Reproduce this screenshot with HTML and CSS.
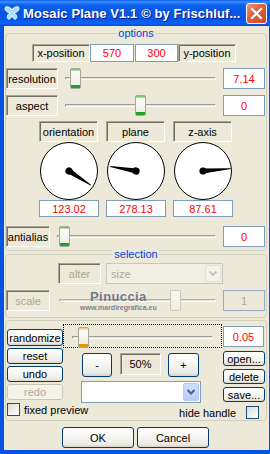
FILE: index.html
```html
<!DOCTYPE html>
<html>
<head>
<meta charset="utf-8">
<title>Mosaic Plane</title>
<link rel="stylesheet" href="styles.css">
</head>
<body>
<div class="window">
  <div class="titlebar">
    <svg class="app-icon" width="16" height="16" viewBox="0 0 16 16">
      <path d="M8 5 C6.5 1.5 1 0.8 1 3.2 C1 6 4 7.6 6.2 8 C3.5 9 2.4 12 4 13.8 C5.8 15.2 7.2 12.4 8 10.2 C8.8 12.4 10.2 15.2 12 13.8 C13.6 12 12.5 9 9.8 8 C12 7.6 15 6 15 3.2 C15 0.8 9.5 1.5 8 5Z" fill="#A9DDFF" stroke="#FFFFFF" stroke-width="1"/>
    </svg>
    <span class="title">Mosaic Plane V1.1 © by Frischluf...</span>
    <span class="close">
      <svg width="19" height="19" viewBox="0 0 19 19"><path d="M5 5 L14 14 M14 5 L5 14" stroke="#FFFFFF" stroke-width="2.2" stroke-linecap="square"/></svg>
    </span>
  </div>
  <div class="client">
    <div class="group options">
      <span class="group-title">options</span>
      <div class="row pos-row">
        <span class="sunken lbl-pos">x-position</span>
        <span class="edit pos-x">570</span>
        <span class="edit pos-y">300</span>
        <span class="sunken lbl-pos">y-position</span>
      </div>
      <div class="row slider-row">
        <span class="sunken lbl-wide">resolution</span>
        <div class="slider slider-wide"><div class="track"></div><span class="thumb" style="left:12px"></span></div>
        <span class="edit val">7.14</span>
      </div>
      <div class="row slider-row">
        <span class="sunken lbl-wide">aspect</span>
        <div class="slider slider-wide"><div class="track"></div><span class="thumb" style="left:77px"></span></div>
        <span class="edit val">0</span>
      </div>
      <div class="dials">
        <div class="dial">
          <span class="sunken dial-lbl">orientation</span>
          <svg class="dial-face" width="60" height="58" viewBox="0 0 60 58">
            <circle cx="30" cy="29" r="28.5" fill="#FFFFFF" stroke="#000000"/>
            <g transform="translate(30 29) rotate(33)"><path d="M0 -2.6 L26 -0.4 L26 0.4 L0 2.6Z"/><circle r="3.6"/></g>
          </svg>
          <span class="edit dial-val">123.02</span>
        </div>
        <div class="dial">
          <span class="sunken dial-lbl">plane</span>
          <svg class="dial-face" width="60" height="58" viewBox="0 0 60 58">
            <circle cx="30" cy="29" r="28.5" fill="#FFFFFF" stroke="#000000"/>
            <g transform="translate(30 29) rotate(190)"><path d="M0 -2.6 L26 -0.4 L26 0.4 L0 2.6Z"/><circle r="3.6"/></g>
          </svg>
          <span class="edit dial-val">278.13</span>
        </div>
        <div class="dial">
          <span class="sunken dial-lbl">z-axis</span>
          <svg class="dial-face" width="60" height="58" viewBox="0 0 60 58">
            <circle cx="30" cy="29" r="28.5" fill="#FFFFFF" stroke="#000000"/>
            <g transform="translate(30 29) rotate(-5)"><path d="M0 -2.6 L28 -0.4 L28 0.4 L0 2.6Z"/><circle r="3.6"/></g>
          </svg>
          <span class="edit dial-val">87.61</span>
        </div>
      </div>
      <div class="row slider-row aa-row">
        <span class="sunken lbl-narrow">antialias</span>
        <div class="slider slider-narrow"><div class="track"></div><span class="thumb" style="left:9px"></span></div>
        <span class="edit val">0</span>
      </div>
    </div>

    <div class="group selection">
      <span class="group-title">selection</span>
      <div class="row alter-row">
        <span class="sunken disabled lbl-alter">alter</span>
        <div class="combo combo-disabled">
          <span class="combo-text">size</span>
          <span class="combo-btn"><svg width="14" height="15" viewBox="0 0 14 15"><path d="M3.5 5.5 L7 9 L10.5 5.5" fill="none" stroke="#C5C4BC" stroke-width="2"/></svg></span>
        </div>
      </div>
      <div class="row slider-row scale-row">
        <span class="sunken disabled lbl-narrow">scale</span>
        <div class="slider slider-narrow"><div class="track track-scale"></div><span class="thumb thumb-disabled" style="left:120px"></span></div>
        <span class="edit val edit-disabled">1</span>
      </div>
      <div class="watermark">
        <span class="wm-name">Pinuccia</span>
        <span class="wm-url">www.mardiregrafica.eu</span>
      </div>
    </div>

    <div class="group tools">
      <div class="row rand-row">
        <span class="btn btn-rand">randomize</span>
        <div class="slider slider-focus"><div class="track track-focus"></div><span class="thumb thumb-hot" style="left:14px"></span></div>
        <span class="edit val val-rand">0.05</span>
      </div>
      <div class="lower">
        <div class="col-left">
          <span class="btn btn-small">reset</span>
          <span class="btn btn-small">undo</span>
          <span class="btn btn-small disabled">redo</span>
        </div>
        <div class="col-mid">
          <div class="zoom-row">
            <span class="btn btn-zoom">-</span>
            <span class="sunken zoom-val">50%</span>
            <span class="btn btn-zoom btn-plus">+</span>
          </div>
          <div class="combo combo-active">
            <span class="combo-text"></span>
            <span class="combo-btn"><svg width="14" height="16" viewBox="0 0 14 16"><path d="M3.5 6 L7 9.5 L10.5 6" fill="none" stroke="#4D6185" stroke-width="2"/></svg></span>
          </div>
        </div>
        <div class="col-right">
          <span class="btn btn-file">open...</span>
          <span class="btn btn-file">delete</span>
          <span class="btn btn-file">save...</span>
        </div>
      </div>
      <div class="checks">
        <label class="check"><span class="box"></span><span>fixed preview</span></label>
        <label class="check check-right"><span>hide handle</span><span class="box"></span></label>
      </div>
    </div>

    <div class="dialog-buttons">
      <span class="btn btn-dlg">OK</span>
      <span class="btn btn-dlg">Cancel</span>
    </div>
  </div>
</div>
</body>
</html>
```

FILE: styles.css
```css
* { box-sizing: border-box; }
html, body { margin: 0; padding: 0; }
body {
  width: 270px;
  height: 454px;
  overflow: hidden;
  background: #ffffff;
  font-family: "Liberation Sans", Arial, sans-serif;
  font-size: 11px;
  color: #000000;
}

.window {
  width: 270px;
  height: 454px;
  background: #0553E2;
  display: flex;
  flex-direction: column;
}

/* title bar */
.titlebar {
  height: 26px;
  flex: none;
  display: flex;
  align-items: center;
  background: linear-gradient(to bottom, #0A5FF0 0%, #3C8FFB 7%, #0F62EC 18%, #0657E6 45%, #0658EB 75%, #0C62F3 90%, #0348D8 100%);
}
.app-icon { margin-left: 4px; flex: none; }
.title {
  margin-left: 3px;
  color: #FFFFFF;
  font-weight: bold;
  font-size: 13px;
  letter-spacing: 0.1px;
  white-space: nowrap;
  text-shadow: 1px 1px 0 #0A1A8C;
}
.close {
  margin-left: auto;
  margin-right: 3px;
  width: 21px;
  height: 21px;
  flex: none;
  border: 1px solid #FFFFFF;
  border-radius: 3px;
  background: linear-gradient(135deg, #F0957A 0%, #E0643F 40%, #CC4A22 100%);
  display: flex;
  align-items: center;
  justify-content: center;
}

/* client */
.client {
  flex: 1;
  margin: 0 1px 4px 4px;
  background: #ECE9D8;
  display: flex;
  flex-direction: column;
}

.group {
  position: relative;
  margin-left: 1px;
  width: 262px;
  border: 1px solid #D0D0BF;
  border-radius: 4px;
  flex: none;
}
.group-title {
  position: absolute;
  top: -7px;
  left: 50%;
  transform: translateX(-50%);
  padding: 0 2px;
  background: #ECE9D8;
  color: #0046D5;
  line-height: 13px;
  white-space: nowrap;
}

.options { margin-top: 7px; padding: 10px 1px 3px 0; }
.selection { margin-top: 3px; padding: 8px 1px 6px 0; }
.tools { margin-top: 2px; padding: 3px 1px 1px 0; }

.row { display: flex; flex: none; }

/* common widgets */
.sunken {
  display: flex;
  align-items: center;
  justify-content: center;
  border-style: solid;
  border-width: 1px;
  border-color: #A7A596 #FFFFFF #FFFFFF #A7A596;
  box-shadow: inset 1px 1px 0 #716F64;
  white-space: nowrap;
  flex: none;
}
.sunken.disabled { color: #ACA899; }

.edit {
  display: flex;
  align-items: center;
  justify-content: center;
  border: 1px solid #7F9DB9;
  background: #FFFFFF;
  color: #FF0000;
  flex: none;
}
.edit-disabled {
  background: #ECE9D8;
  color: #ACA899;
  border-color: #95AAC4;
}

.btn {
  display: flex;
  align-items: center;
  justify-content: center;
  border: 1px solid #003C74;
  border-radius: 3px;
  background: linear-gradient(to bottom, #FFFFFF 0%, #F6F6F2 45%, #ECEBE6 85%, #D8D3C8 100%);
  color: #000000;
  white-space: nowrap;
  flex: none;
}
.btn.disabled {
  border-color: #C9C7BA;
  color: #ACA899;
  background: #F5F4EA;
}

/* options rows */
.pos-row { height: 18px; padding-left: 26px; }
.lbl-pos { width: 58px; }
.pos-x { width: 44px; }
.pos-y { width: 43px; margin-left: 1px; }

.slider-row { height: 21px; margin-top: 6px; }
.lbl-wide { width: 52px; }
.lbl-narrow { width: 44px; }
.val { width: 42px; }

.slider { position: relative; flex: none; height: 21px; }
.slider-wide { width: 165px; }
.slider-narrow { width: 173px; }
.track {
  margin: 9px 7px 0 7px;
  height: 3px;
  border-top: 1px solid #9D9C95;
  border-left: 1px solid #9D9C95;
  border-bottom: 1px solid #FFFFFF;
  border-right: 1px solid #FFFFFF;
  background: #E3E1D6;
}
.track-scale { margin-left: 9px; border-color: #B5B3A8 #FFFFFF #FFFFFF #B5B3A8; }
.thumb {
  position: absolute;
  top: 0;
  width: 11px;
  height: 21px;
  border: 1px solid #A8A79B;
  border-radius: 2px;
  background: linear-gradient(to bottom, #5BC25B 0, #B9E9B3 2px, #FBFBF9 2px, #EFEEE8 calc(100% - 3px), #21A121 calc(100% - 3px), #21A121 100%);
}
.thumb-disabled {
  border-color: #C9C7BA;
  background: linear-gradient(to bottom, #F8F8F5 0%, #EDECE6 100%);
}
.thumb-hot {
  top: 2px;
  background: linear-gradient(to bottom, #F6C66E 0, #FBE2B0 2px, #FBFBF9 2px, #EFEEE8 calc(100% - 3px), #E5970A calc(100% - 3px), #E5970A 100%);
}

/* dials */
.dials { display: flex; gap: 7px; padding-left: 33px; margin-top: 5px; }
.dial { width: 60px; display: flex; flex-direction: column; }
.dial-lbl { height: 21px; width: 59px; }
.dial-face { display: block; }
.dial-val { height: 17px; width: 60px; }
.aa-row { margin-top: 9px; }

/* selection */
.alter-row { height: 21px; padding-left: 52px; }
.lbl-alter { width: 43px; }
.combo {
  display: flex;
  align-items: center;
  flex: none;
  border: 1px solid #7F9DB9;
  background: #FFFFFF;
  padding: 1px;
}
.combo-disabled {
  width: 117px;
  margin-left: 5px;
  border-color: #C9C7BA;
  background: #F1EFE4;
}
.combo-text { flex: 1; padding-left: 3px; color: #ACA899; }
.combo-btn {
  width: 16px;
  height: 100%;
  display: flex;
  align-items: center;
  justify-content: center;
  border: 1px solid #E3E1D6;
  border-radius: 2px;
  background: #F3F2EC;
}
.combo-active .combo-btn {
  border-color: #B6C8F2;
  background: linear-gradient(to bottom, #D2DDFB 0%, #B9CCF6 100%);
}
.scale-row { margin-top: 6px; }

.watermark {
  position: absolute;
  left: 74px;
  top: 35px;
  display: flex;
  flex-direction: column;
  align-items: center;
  pointer-events: none;
}
.wm-name {
  font-weight: bold;
  font-size: 13px;
  letter-spacing: 0.4px;
  line-height: 14px;
  color: rgba(80, 88, 125, 0.78);
}
.wm-url {
  font-weight: bold;
  font-size: 7px;
  line-height: 8px;
  color: rgba(95, 100, 120, 0.8);
}

/* tools */
.rand-row { height: 24px; }
.btn-rand { width: 56px; height: 17px; margin: 5px 0 0 1px; }
.slider-focus {
  width: 159px;
  height: 24px;
  border: 1px dotted #000000;
}
.track-focus { margin: 11px 8px 0 8px; }
.val-rand { width: 41px; height: 21px; margin: 2px 0 0 1px; }

.lower { display: flex; height: 55px; }
.col-left { width: 56px; margin-left: 1px; display: flex; flex-direction: column; gap: 2px; }
.btn-small { height: 16px; }
.col-mid { width: 120px; margin-left: 18px; display: flex; flex-direction: column; }
.zoom-row { display: flex; height: 24px; margin-top: 5px; }
.btn-zoom { width: 30px; height: 24px; margin-left: 1px; }
.zoom-val { width: 41px; height: 22px; margin-left: 8px; }
.btn-plus { width: 31px; margin-left: 7px; }
.combo-active { margin-top: 4px; height: 22px; width: 120px; }
.col-right { width: 42px; margin-left: 22px; display: flex; flex-direction: column; }
.btn-file { height: 15px; margin-top: 3px; }

.checks { display: flex; height: 16px; }
.check { display: flex; align-items: center; height: 13px; }
.check .box {
  width: 13px;
  height: 13px;
  border: 1px solid #1C5180;
  background: linear-gradient(135deg, #DCDCD7 0%, #FFFFFF 100%);
  flex: none;
}
.check:first-child { margin-left: 1px; }
.check:first-child .box { margin-right: 4px; }
.check-right { margin-left: auto; margin-top: 3px; margin-right: 6px; }
.check-right .box { margin-left: 10px; }

.dialog-buttons { display: flex; margin-top: 6px; padding-left: 58px; gap: 3px; }
.btn-dlg { width: 72px; height: 21px; }
```
